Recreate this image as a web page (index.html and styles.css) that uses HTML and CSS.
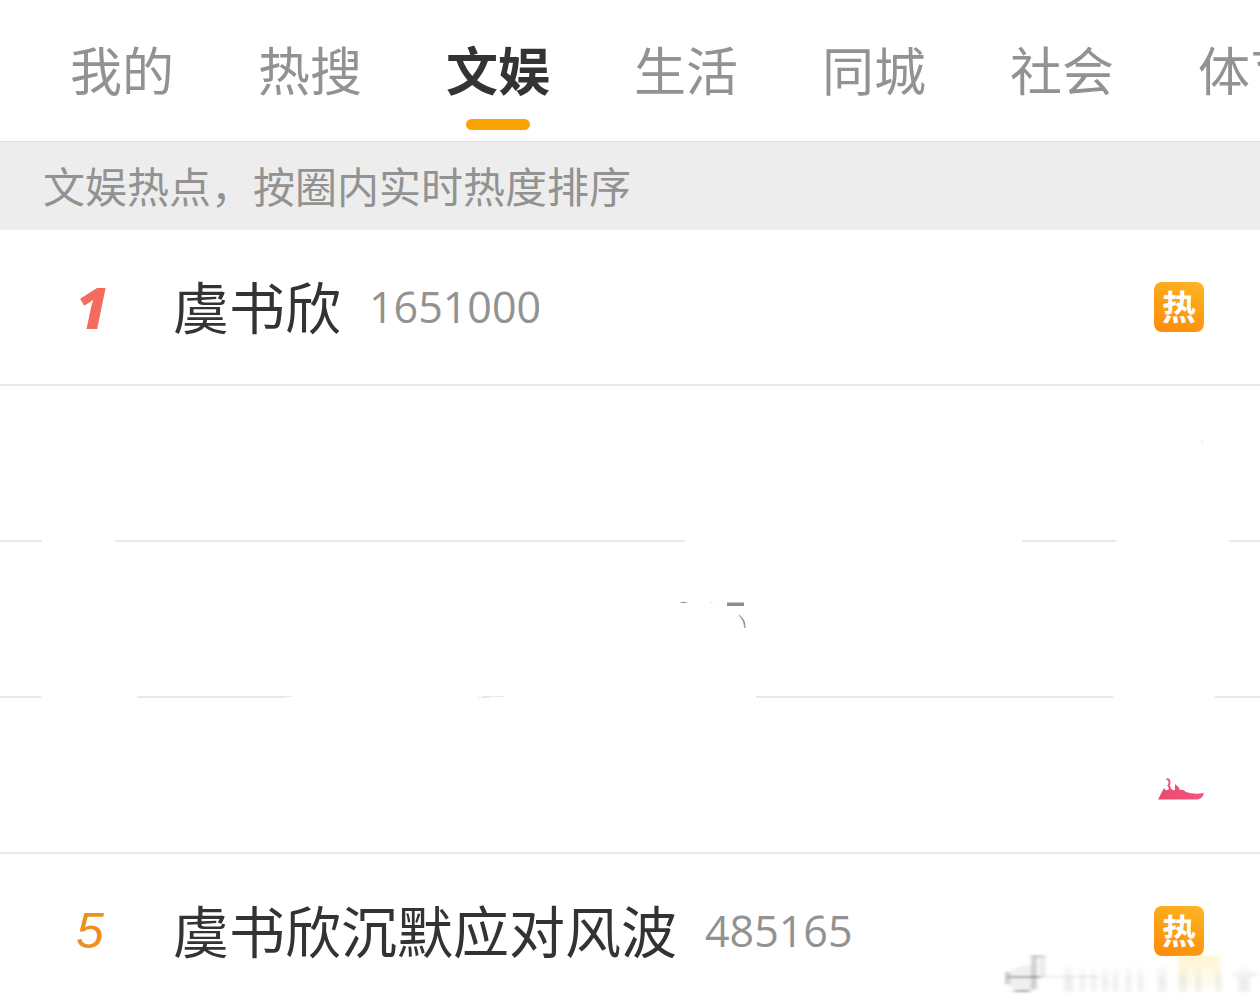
FILE: index.html
```html
<!DOCTYPE html>
<html lang="zh-CN">
<head>
    <meta charset="UTF-8">
    <meta name="viewport" content="width=device-width, initial-scale=1.0">
    <title>文娱热点</title>
    <link rel="stylesheet" href="styles.css">
</head>
<body>
    <nav class="tabs">
        <a href="#" class="tab">我的</a>
        <a href="#" class="tab">热搜</a>
        <a href="#" class="tab active">文娱</a>
        <a href="#" class="tab">生活</a>
        <a href="#" class="tab">同城</a>
        <a href="#" class="tab">社会</a>
        <a href="#" class="tab">体育</a>
    </nav>

    <p class="notice">文娱热点，按圈内实时热度排序</p>

    <main class="hot-list">
        <a href="#" class="row">
            <span class="rank rank-top">1</span>
            <span class="title">虞书欣</span>
            <span class="count">1651000</span>
            <span class="hot-tag">热</span>
        </a>
        <svg class="line" viewBox="0 0 1260 2" preserveAspectRatio="none">
            <path d="M0 1H1260"/>
        </svg>

        <div class="row">
            <svg class="mark mark-end" width="50" height="50" viewBox="0 0 50 50">
                <path d="M45 1q4 1 4 5" fill="none" stroke="#ececec"/>
            </svg>
        </div>
        <svg class="line" viewBox="0 0 1260 2" preserveAspectRatio="none">
            <path d="M0 1H42M115 1H685M1022 1H1116M1229 1H1260"/>
        </svg>

        <div class="row">
            <svg class="mark mark-count" width="72" height="50" viewBox="0 0 72 50">
                <path d="M5 9q5-2 9 0z" fill="#858585"/>
                <path d="M35 9q3-1 5 0z" fill="#bbb"/>
                <path d="M53 8.500h17v3.500H53z" fill="#8e8e8e"/>
                <path d="M65 21q7 5 6 13q-1-8-6-13z" fill="#777" stroke="#888" stroke-width=".6"/>
            </svg>
        </div>
        <svg class="line" viewBox="0 0 1260 2" preserveAspectRatio="none">
            <path d="M0 1H41M137 1H285M756 1H1113M1215 1H1260"/>
            <path d="M285 .5H292M478 1.500H490M482 .5H505" stroke-width="1"/>
        </svg>

        <div class="row">
            <svg class="mark mark-end" width="50" height="50" viewBox="0 0 50 50">
                <defs>
                    <linearGradient id="pink" x1="0" y1="0" x2="1" y2="0">
                        <stop offset="0" stop-color="#e84a6c"/>
                        <stop offset="1" stop-color="#f5547e"/>
                    </linearGradient>
                </defs>
                <path d="M4 49.500 10 38q2 4 5 1l1-3q1 5 5 4V34q3 2 5 6 3-1 6 2 8 3 18 1-1 5-6 6.500z" fill="url(#pink)"/>
                <path d="M12.500 29.500q3-1 3 3 0 2-1 3l2 4-1 2" fill="none" stroke="#ee5878" stroke-width="2"/>
            </svg>
        </div>
        <svg class="line" viewBox="0 0 1260 2" preserveAspectRatio="none">
            <path d="M0 1H1260"/>
        </svg>

        <a href="#" class="row">
            <span class="rank">5</span>
            <span class="title">虞书欣沉默应对风波</span>
            <span class="count">485165</span>
            <span class="hot-tag">热</span>
        </a>
    </main>

    <svg class="watermark" width="256" height="52" viewBox="0 0 256 52">
        <defs>
            <filter id="soft" x="-10%" y="-10%" width="120%" height="120%">
                <feGaussianBlur stdDeviation="2 1"/>
            </filter>
            <linearGradient id="fade" x1="0" y1="0" x2="0" y2="1">
                <stop offset="0" stop-color="#aaa" stop-opacity="0"/>
                <stop offset=".6" stop-color="#aaa" stop-opacity=".22"/>
                <stop offset="1" stop-color="#aaa" stop-opacity=".16"/>
            </linearGradient>
            <linearGradient id="glow" x1="0" y1="0" x2="0" y2="1">
                <stop offset="0" stop-color="#fff0b0" stop-opacity=".6"/>
                <stop offset="1" stop-color="#fff0b0" stop-opacity=".05"/>
            </linearGradient>
        </defs>
        <path d="M174 2h42v36h-42z" fill="url(#glow)" filter="url(#soft)"/>
        <g fill="url(#fade)" filter="url(#soft)">
            <path d="M60 10h9v28h-9zM76 12h5v26h-5zM87 10h5v28h-5zM98 10h6v28h-6zM109 12h5v26h-5zM122 10h5v28h-5zM134 12h5v26h-5zM154 10h8v28h-8zM175 10h8v28h-8zM192 10h5v28h-5zM212 12h5v26h-5zM229 18h24v5h-24zM234 12h12v26h-12z"/>
        </g>
        <g filter="url(#soft)">
            <path d="M2 24q4-14 28-12v26H17q-9-2-15-9z" fill="#ccc" opacity=".3"/>
            <path d="M28 1h4v34h-4z" fill="#777" opacity=".5"/>
            <path d="M32 1h9v3h-9zM37 3h3v20h-3z" fill="#999" opacity=".4"/>
            <path d="M2 18h3v12H2zM2 22h34v2H2zM10 36h16v2H10z" fill="#777" opacity=".6"/>
            <path d="M36 22h60v2H36z" fill="#999" opacity=".15"/>
        </g>
    </svg>
</body>
</html>
```

FILE: styles.css
```css
* {
    margin: 0;
    padding: 0;
    box-sizing: border-box;
}

body {
    position: relative;
    font-family: 'Noto Sans CJK SC', sans-serif;
    background: #fff;
    color: #333;
    overflow-x: hidden;
}

a {
    color: inherit;
    text-decoration: none;
}

.tabs {
    display: flex;
    gap: 84px;
    height: 141px;
    padding: 32px 0 0 70px;
    overflow: hidden;
}

.tab {
    position: relative;
    flex: none;
    font-size: 52px;
    line-height: 74px;
    color: #929292;
}

.tab.active {
    color: #333;
    font-weight: bold;
}

.tab.active::after {
    content: '';
    position: absolute;
    top: 87px;
    left: 20px;
    right: 20px;
    height: 11px;
    border-radius: 6px;
    background: #fca304;
}

.notice {
    padding: 0 43px 2px;
    border-top: 1px solid #dfdfdf;
    background: #ededed;
    color: #929292;
    font-size: 42px;
    line-height: 86px;
}

.row {
    display: flex;
    align-items: center;
    padding: 38px 56px 38px 76px;
    min-height: 154px;
}

.row:last-child {
    padding-bottom: 36px;
    min-height: 152px;
}

.line {
    display: block;
    width: 100%;
    height: 2px;
    stroke: #e9e9e9;
    stroke-width: 2;
}

.rank {
    width: 97px;
    font-family: 'Liberation Sans', sans-serif;
    font-size: 50px;
    font-style: italic;
    line-height: 78px;
    color: #ee9020;
}

.rank-top {
    font-family: 'Open Sans', sans-serif;
    font-size: 56px;
    font-weight: 800;
    color: #f56b60;
}

.title {
    padding-bottom: 4px;
    font-size: 56px;
    line-height: 74px;
}

.count {
    margin-left: 28px;
    font-family: 'Open Sans', sans-serif;
    font-size: 43px;
    line-height: 78px;
    color: #929292;
}

.hot-tag {
    width: 50px;
    height: 50px;
    margin-left: auto;
    border-radius: 8px;
    background: linear-gradient(20deg, #fc8a08, #fdb526);
    color: #fff;
    font-size: 34px;
    font-weight: bold;
    line-height: 48px;
    text-align: center;
}

.mark {
    flex: none;
}

.mark-end {
    margin-left: auto;
}

.mark-count {
    margin-left: 598px;
}

.watermark {
    position: absolute;
    right: 0;
    bottom: 0;
}
```
